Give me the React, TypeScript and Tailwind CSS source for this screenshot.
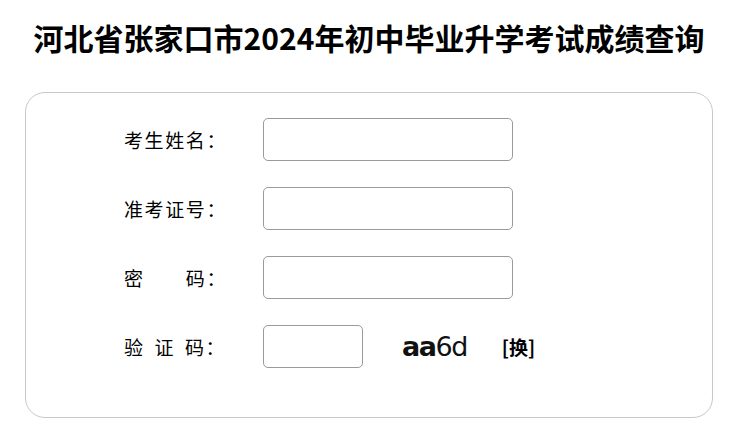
export default function App() {
  const rows = ['考生姓名：', '准考证号：', '密　　码：'];

  return (
    <div className="w-[734px] h-[430px] bg-white text-black font-['Noto_Sans_CJK_SC','Noto_Sans',sans-serif]">
      <div className="h-[74px] flex items-center justify-center pl-[4px]">
        <h1 className="text-[30px] font-bold leading-none">
          河北省张家口市2024年初中毕业升学考试成绩查询
        </h1>
      </div>

      <div className="ml-[25px] mt-[18px] w-[688px] h-[326px] border border-[#c8c8c8] rounded-[20px] pl-[98px] pt-[25px]">
        <div className="flex flex-col gap-[26px]">
          {rows.map((label) => (
            <div key={label} className="flex items-center h-[43px]">
              <label className="w-[139px] text-[19px] tracking-[1.6px] leading-none">{label}</label>
              <input
                type="text"
                className="w-[250px] h-[43px] border border-[#9a9a9a] rounded-[5px] outline-none px-2"
              />
            </div>
          ))}

          <div className="flex items-center h-[43px]">
            <label className="w-[139px] text-[19px] tracking-[1.6px] leading-none [word-spacing:4px]">验 证 码：</label>
            <input
              type="text"
              className="w-[100px] h-[43px] border border-[#9a9a9a] rounded-[5px] outline-none px-2"
            />
            <span className="ml-[39px] text-[27px] leading-none text-[#111] font-['DejaVu_Sans',sans-serif] tracking-[-1.5px]">
              <span className="font-bold">aa</span>
              <span>6d</span>
            </span>
            <span className="ml-[35px] text-[19px] font-bold leading-none">[换]</span>
          </div>
        </div>
      </div>
    </div>
  );
}
